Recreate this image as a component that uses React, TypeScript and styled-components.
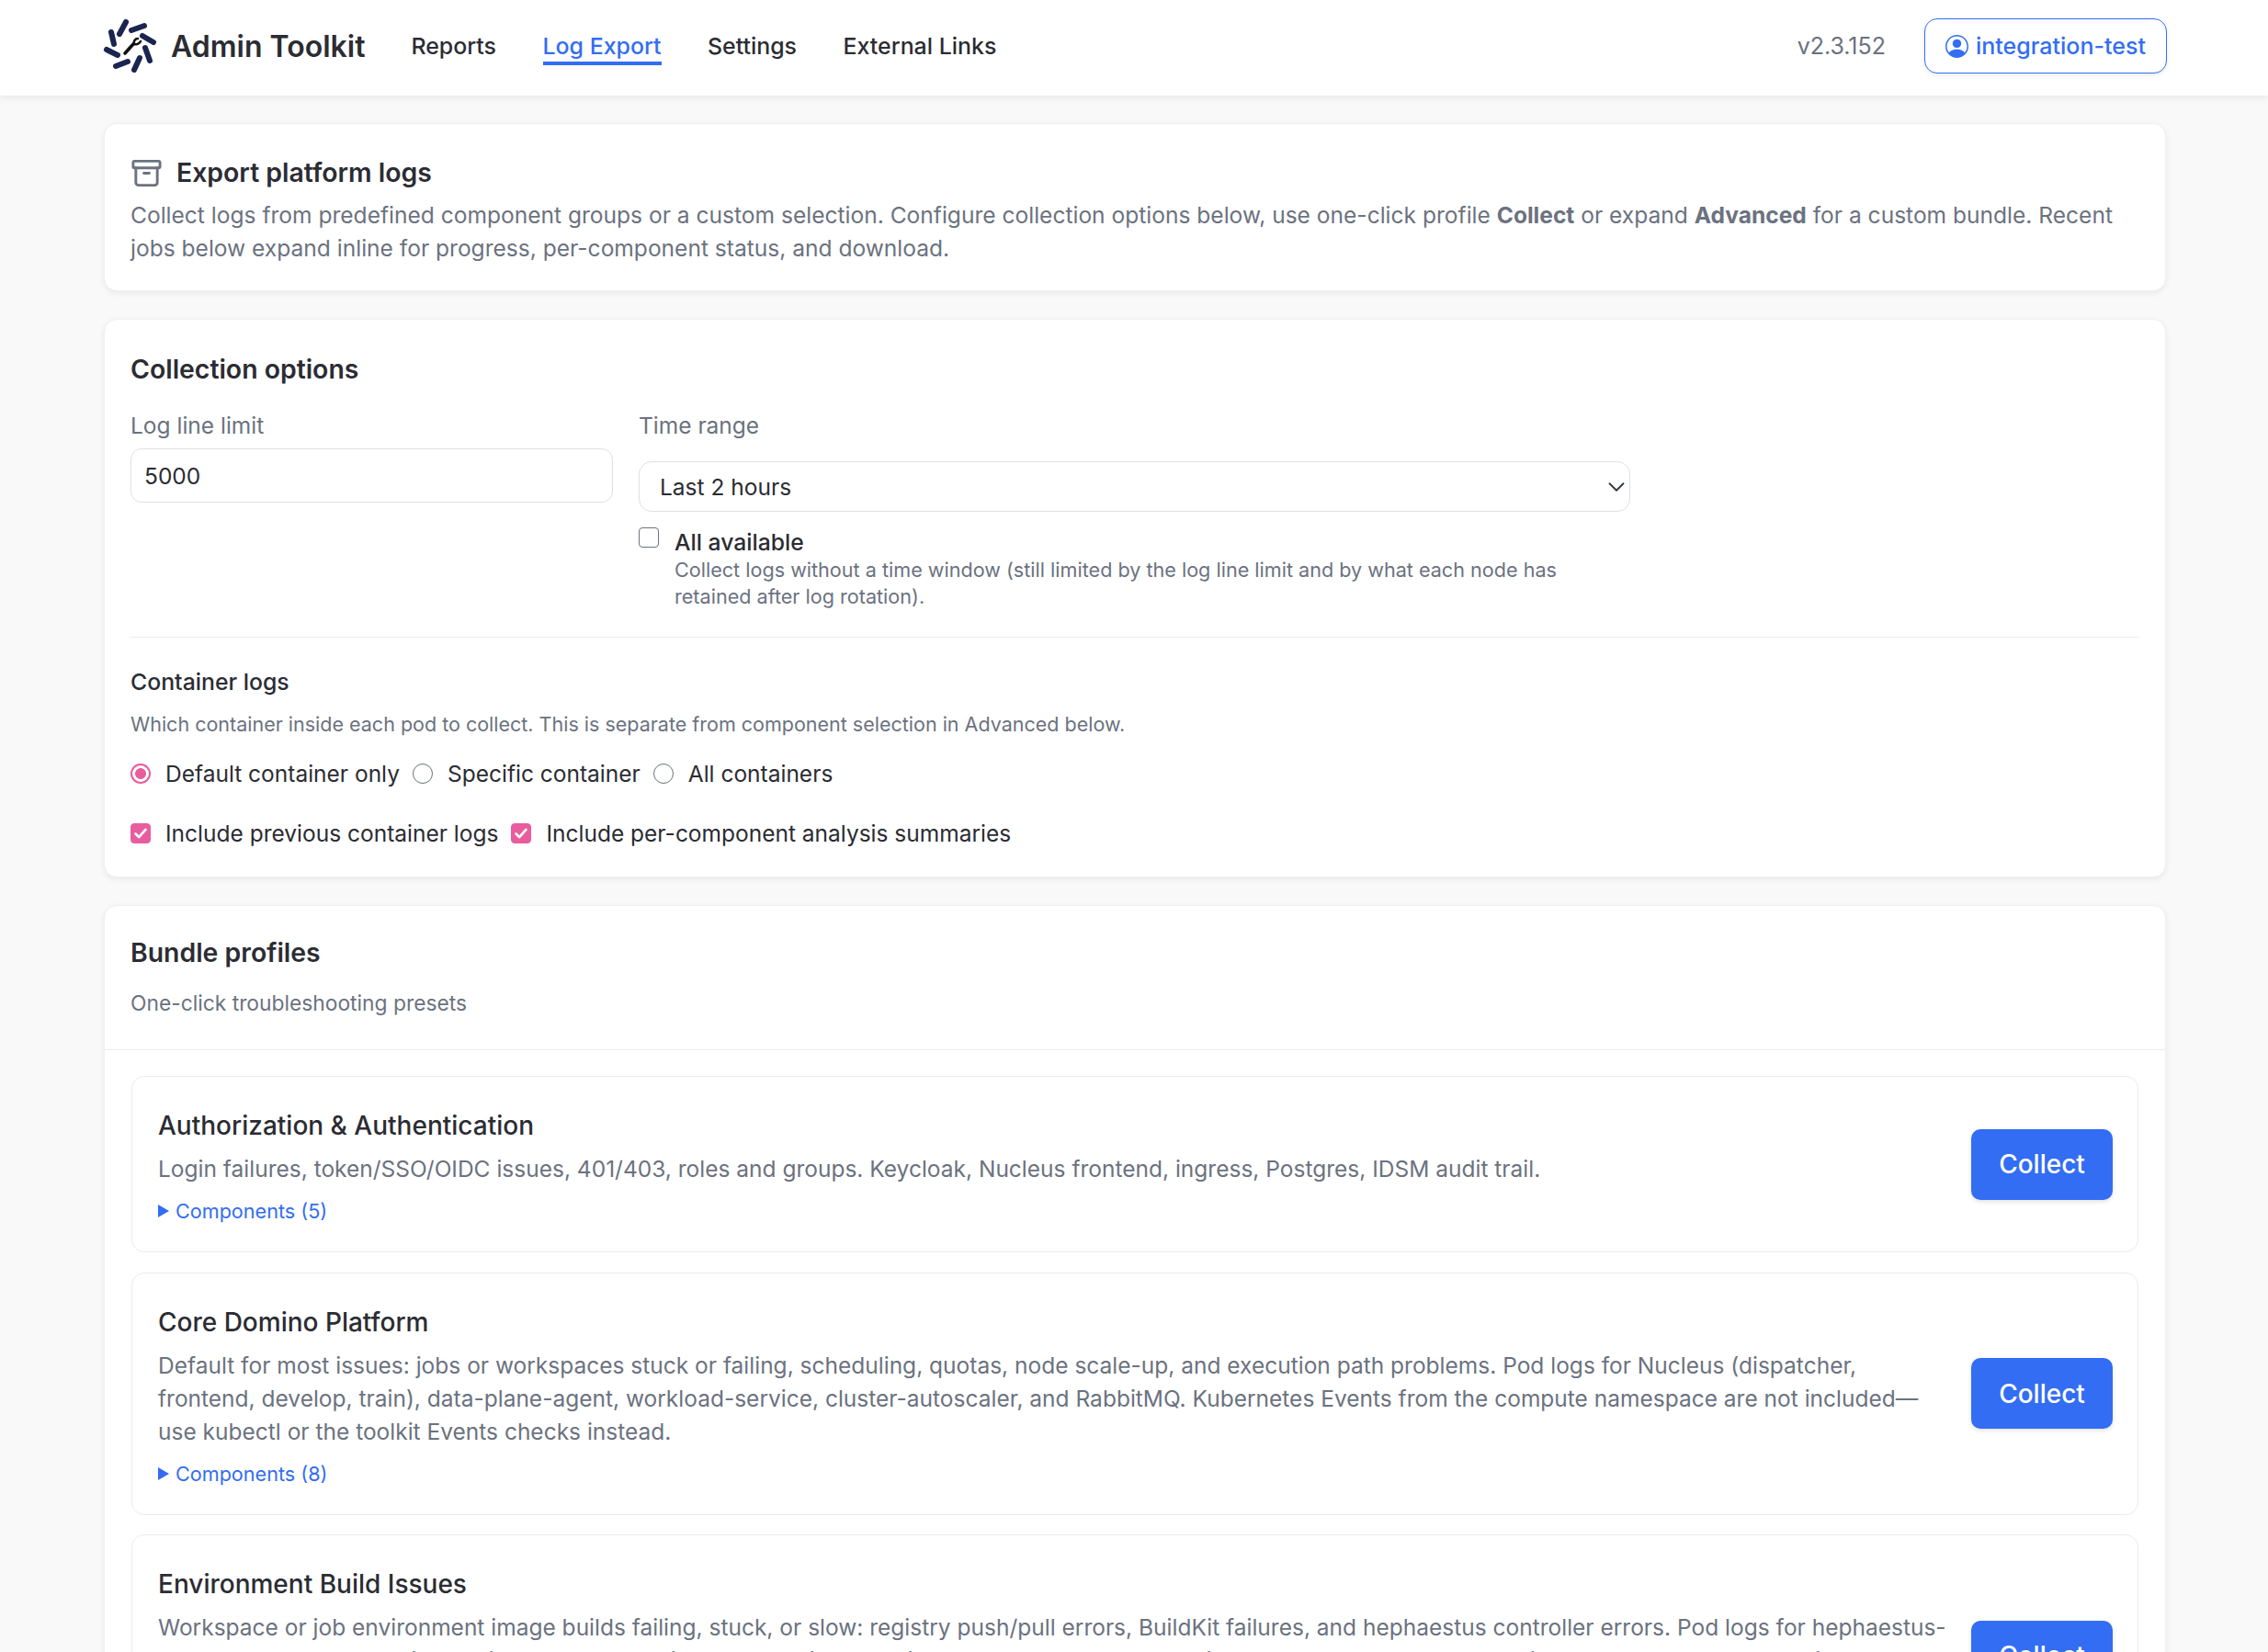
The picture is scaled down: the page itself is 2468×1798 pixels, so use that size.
import React from "react";
import styled, { createGlobalStyle } from "styled-components";
import { BsPersonCircle } from "react-icons/bs";
import { Archive } from "lucide-react";

const BLUE = "#336df4";
const INK = "#2b2c33";
const MUTED = "#6b7280";
const PINK = "#e85d9e";
const LINE = "#ebecef";

const GlobalStyle = createGlobalStyle`
  html, body {
    margin: 0;
    height: 1798px;
    overflow: hidden;
    background: #f9f9fa;
    color: ${INK};
    font-family: Inter, "Noto Sans", sans-serif;
  }
  * { box-sizing: border-box; }
`;

const NavBar = styled.nav`
  display: flex;
  align-items: center;
  height: 104px;
  padding: 0 110px 4px 112px;
  background: #fff;
  box-shadow: 0 2px 8px rgba(0, 0, 0, 0.08);
`;

const Brand = styled.div`
  display: flex;
  align-items: center;
  gap: 16px;
  font-size: 32px;
  font-weight: 600;
`;

const NavLinks = styled.div`
  display: flex;
  gap: 50.5px;
  margin-left: 50px;
`;

const NavLink = styled.a<{ $active?: boolean }>`
  font-size: 24.9px;
  font-weight: 500;
  line-height: 33px;
  color: ${(props) => (props.$active ? BLUE : INK)};
  border-bottom: 4px solid ${(props) => (props.$active ? BLUE : "transparent")};
  border-top: 4px solid transparent;
`;

const Version = styled.span`
  margin-left: auto;
  margin-right: 42px;
  font-size: 25px;
  color: ${MUTED};
`;

const UserButton = styled.button`
  display: flex;
  align-items: center;
  justify-content: center;
  gap: 8px;
  width: 264px;
  height: 60px;
  background: #fff;
  border: 1.5px solid ${BLUE};
  border-radius: 14px;
  box-shadow: 0 2px 4px rgba(0, 0, 0, 0.08);
  color: ${BLUE};
  font: 500 25px Inter, sans-serif;
`;

const Main = styled.main`
  display: flex;
  flex-direction: column;
  gap: 30px;
  padding: 30px 111px 0 113px;
`;

const Card = styled.section`
  background: #fff;
  border: 1px solid #f0f0f2;
  border-radius: 14px;
  box-shadow: 0 2px 6px rgba(0, 0, 0, 0.07);
`;

const IntroCard = styled(Card)`
  height: 183px;
  padding: 35px 28px 0;
`;

const TitleRow = styled.div`
  display: flex;
  align-items: center;
  gap: 15px;
  height: 36px;
  color: ${MUTED};
`;

const CardTitle = styled.h2`
  margin: 0;
  font-size: 28.4px;
  font-weight: 600;
  line-height: 36px;
  color: ${INK};
`;

const IntroText = styled.p`
  margin: 10px 0 0;
  font-size: 24.55px;
  line-height: 36px;
  color: ${MUTED};

  strong {
    font-weight: 700;
  }
`;

const OptionsCard = styled(Card)`
  padding: 36px 28px 0;
  height: 608px;
`;

const FieldRow = styled.div`
  display: flex;
  gap: 28px;
  margin-top: 25px;
  padding-bottom: 29px;
  border-bottom: 1px solid ${LINE};
`;

const Field = styled.div<{ $width: number }>`
  width: ${(props) => props.$width}px;
`;

const FieldLabel = styled.label`
  display: block;
  font-size: 24.5px;
  line-height: 36px;
  color: ${MUTED};
`;

const TextInput = styled.input`
  display: block;
  width: 100%;
  height: 59px;
  margin-top: 7px;
  padding: 0 14px;
  background: #fff;
  border: 1px solid #dfe0e5;
  border-radius: 12px;
  color: ${INK};
  font: 400 24.5px Inter, sans-serif;
`;

const SelectInput = styled.select`
  display: block;
  width: 100%;
  height: 55px;
  margin-top: 21px;
  padding: 0 44px 0 22px;
  appearance: none;
  background: #fff url("data:image/svg+xml,%3Csvg xmlns='http://www.w3.org/2000/svg' viewBox='0 0 16 16'%3E%3Cpath fill='none' stroke='%23343a40' stroke-linecap='round' stroke-linejoin='round' stroke-width='1.5' d='m2 5 6 6 6-6'/%3E%3C/svg%3E") no-repeat right 4px center / 20px 20px;
  border: 1px solid #dfe0e5;
  border-radius: 14px;
  color: ${INK};
  font: 400 24.5px Inter, sans-serif;
`;

const AllAvailable = styled.div`
  display: flex;
  gap: 17px;
  margin-top: 17px;
`;

const CheckBox = styled.input.attrs({ type: "checkbox" })`
  flex: none;
  width: 22px;
  height: 22px;
  margin: 0;
  appearance: none;
  background: #fff;
  border: 1.5px solid #6b7280;
  border-radius: 4px;

  &:checked {
    border-color: ${PINK};
    background: ${PINK} url("data:image/svg+xml,%3Csvg xmlns='http://www.w3.org/2000/svg' viewBox='0 0 22 22'%3E%3Cpath fill='none' stroke='%23fff' stroke-linecap='round' stroke-linejoin='round' stroke-width='3' d='m5 11.5 4 4 8-9'/%3E%3C/svg%3E") center / 100% 100%;
  }
`;

const RadioButton = styled.input.attrs({ type: "radio" })`
  flex: none;
  width: 22px;
  height: 22px;
  margin: 0;
  appearance: none;
  background: #fff;
  border: 1.5px solid #6b7280;
  border-radius: 50%;

  &:checked {
    border: 2px solid ${PINK};
    background: radial-gradient(circle, ${PINK} 0 5.6px, #fff 6.2px);
  }
`;

const AllLabel = styled.div`
  font-size: 24.7px;
  line-height: 32px;
  font-weight: 500;
`;

const SmallNote = styled.div`
  font-size: 21.6px;
  line-height: 29px;
  color: ${MUTED};
`;

const SubTitle = styled.h3`
  margin: 30px 0 0;
  font-size: 24.8px;
  font-weight: 500;
  line-height: 36px;
`;

const HelpText = styled(SmallNote)`
  margin-top: 14px;
  font-size: 21.5px;
`;

const ChoiceRow = styled.div<{ $top: number }>`
  display: flex;
  align-items: center;
  gap: 14px;
  margin-top: ${(props) => props.$top}px;
`;

const Choice = styled.label`
  display: flex;
  align-items: center;
  gap: 16px;
  font-size: 24.5px;
  line-height: 36px;
`;

const BundleCard = styled(Card)`
  padding-bottom: 40px;
`;

const BundleHeader = styled.header`
  height: 157px;
  padding: 33px 28px 0;
  border-bottom: 1px solid ${LINE};
`;

const BundleSub = styled.p`
  margin: 19px 0 0;
  font-size: 22.8px;
  line-height: 36px;
  color: ${MUTED};
`;

const ProfileList = styled.div`
  display: flex;
  flex-direction: column;
  gap: 21.5px;
  padding: 28px 29px 0;
`;

const Profile = styled.article`
  display: flex;
  align-items: center;
  gap: 24px;
  padding: 30px 27px 30px 28px;
  border: 1px solid ${LINE};
  border-radius: 14px;
`;

const ProfileBody = styled.div`
  flex: 1;
  padding-top: 5px;
`;

const ProfileTitle = styled.h4`
  margin: 0;
  font-size: 28px;
  font-weight: 500;
  line-height: 36px;
`;

const ProfileText = styled.p`
  margin: 11px 0 0;
  font-size: 24.5px;
  line-height: 36px;
  color: ${MUTED};
`;

const Components = styled.div`
  display: flex;
  align-items: center;
  gap: 7px;
  margin-top: 14px;
  font-size: 21.6px;
  line-height: 28px;
  color: ${BLUE};
`;

const Caret = styled.span`
  width: 0;
  height: 0;
  border-left: 12px solid ${BLUE};
  border-top: 7px solid transparent;
  border-bottom: 7px solid transparent;
`;

const CollectButton = styled.button`
  flex: none;
  width: 154px;
  height: 77px;
  background: ${BLUE};
  border: 0;
  border-radius: 10px;
  box-shadow: 0 2px 5px rgba(0, 0, 0, 0.12);
  color: #fff;
  font: 500 28px Inter, sans-serif;
`;

const Logo = () => (
  <svg width="58" height="60" viewBox="12 10 58 60" aria-hidden="true">
    <g stroke="#1a2550" strokeWidth="6" strokeLinecap="round" fill="none">
      <path d="M21 25 24 38" />
      <path d="M30 27 37 14" />
      <path d="M43 23 57 18" />
      <path d="M55 29 67 36" />
      <path d="M58 42 63 56" />
      <path d="M52 53 46 66" />
      <path d="M39 57 26 62" />
      <path d="M28 50 16 44" />
    </g>
    <g stroke="#111" fill="none" strokeLinecap="round">
      <path d="M36 48 45 38" strokeWidth="3.6" />
      <path d="M50 32c-3 0-5 3-4 6 3 1 6-1 7-3" strokeWidth="2.6" />
    </g>
  </svg>
);

type ProfileData = { title: string; text: string; count: number };

const profiles: ProfileData[] = [
  {
    title: "Authorization & Authentication",
    text: "Login failures, token/SSO/OIDC issues, 401/403, roles and groups. Keycloak, Nucleus frontend, ingress, Postgres, IDSM audit trail.",
    count: 5,
  },
  {
    title: "Core Domino Platform",
    text: "Default for most issues: jobs or workspaces stuck or failing, scheduling, quotas, node scale-up, and execution path problems. Pod logs for Nucleus (dispatcher, frontend, develop, train), data-plane-agent, workload-service, cluster-autoscaler, and RabbitMQ. Kubernetes Events from the compute namespace are not included—use kubectl or the toolkit Events checks instead.",
    count: 8,
  },
  {
    title: "Environment Build Issues",
    text: "Workspace or job environment image builds failing, stuck, or slow: registry push/pull errors, BuildKit failures, and hephaestus controller errors. Pod logs for hephaestus-manager and related build services, plus the registry and the image builder nodes that run each build. Kubernetes Events are not included, so check the environment revision page for the complete build output.",
    count: 4,
  },
];

export default function App() {
  return (
    <>
      <GlobalStyle />
      <NavBar>
        <Brand>
          <Logo />
          Admin Toolkit
        </Brand>
        <NavLinks>
          <NavLink>Reports</NavLink>
          <NavLink $active>Log Export</NavLink>
          <NavLink>Settings</NavLink>
          <NavLink>External Links</NavLink>
        </NavLinks>
        <Version>v2.3.152</Version>
        <UserButton>
          <BsPersonCircle size={25} />
          integration-test
        </UserButton>
      </NavBar>
      <Main>
        <IntroCard>
          <TitleRow>
            <Archive size={35} strokeWidth={2} />
            <CardTitle>Export platform logs</CardTitle>
          </TitleRow>
          <IntroText>
            Collect logs from predefined component groups or a custom selection. Configure collection options below, use one-click profile{" "}
            <strong>Collect</strong> or expand <strong>Advanced</strong> for a custom bundle. Recent jobs below expand inline for progress,
            per-component status, and download.
          </IntroText>
        </IntroCard>

        <OptionsCard>
          <CardTitle>Collection options</CardTitle>
          <FieldRow>
            <Field $width={525}>
              <FieldLabel>Log line limit</FieldLabel>
              <TextInput defaultValue="5000" />
            </Field>
            <Field $width={1079}>
              <FieldLabel>Time range</FieldLabel>
              <SelectInput defaultValue="2">
                <option value="2">Last 2 hours</option>
              </SelectInput>
              <AllAvailable>
                <CheckBox />
                <div>
                  <AllLabel>All available</AllLabel>
                  <SmallNote>
                    Collect logs without a time window (still limited by the log line limit and by what each node has retained after log rotation).
                  </SmallNote>
                </div>
              </AllAvailable>
            </Field>
          </FieldRow>
          <SubTitle>Container logs</SubTitle>
          <HelpText>Which container inside each pod to collect. This is separate from component selection in Advanced below.</HelpText>
          <ChoiceRow $top={21}>
            <Choice>
              <RadioButton name="container" defaultChecked />
              Default container only
            </Choice>
            <Choice>
              <RadioButton name="container" />
              Specific container
            </Choice>
            <Choice>
              <RadioButton name="container" />
              All containers
            </Choice>
          </ChoiceRow>
          <ChoiceRow $top={29}>
            <Choice>
              <CheckBox defaultChecked />
              Include previous container logs
            </Choice>
            <Choice>
              <CheckBox defaultChecked />
              Include per-component analysis summaries
            </Choice>
          </ChoiceRow>
        </OptionsCard>

        <BundleCard>
          <BundleHeader>
            <CardTitle>Bundle profiles</CardTitle>
            <BundleSub>One-click troubleshooting presets</BundleSub>
          </BundleHeader>
          <ProfileList>
            {profiles.map((profile) => (
              <Profile key={profile.title}>
                <ProfileBody>
                  <ProfileTitle>{profile.title}</ProfileTitle>
                  <ProfileText>{profile.text}</ProfileText>
                  <Components>
                    <Caret />
                    Components ({profile.count})
                  </Components>
                </ProfileBody>
                <CollectButton>Collect</CollectButton>
              </Profile>
            ))}
          </ProfileList>
        </BundleCard>
      </Main>
    </>
  );
}
